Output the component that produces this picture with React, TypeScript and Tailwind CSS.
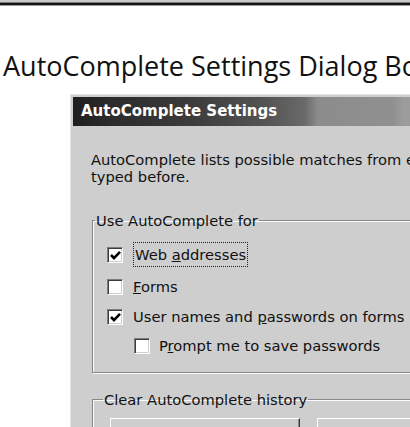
import React from "react";

const ui = { fontFamily: '"DejaVu Sans", Tahoma, sans-serif' };

function Check({ checked }: { checked?: boolean }) {
  return (
    <span className="w-[16px] h-[16px] shrink-0 bg-white border border-t-[#7d7d7d] border-l-[#7d7d7d] border-b-white border-r-white shadow-[inset_1px_1px_0_#3c3c3c,inset_-1px_-1px_0_#cfcfcf] flex items-center justify-center">
      {checked && (
        <svg width="11" height="11" viewBox="0 0 11 11">
          <path d="M1 5 L4 8.2 L10 1.8" fill="none" stroke="#000" strokeWidth="2.6" />
        </svg>
      )}
    </span>
  );
}

function Row({ checked, indent, children }: { checked?: boolean; indent?: boolean; children: React.ReactNode }) {
  return (
    <div className={`h-[30px] flex items-center ${indent ? "pl-[27px] gap-[9px]" : "gap-[10px]"}`}>
      <Check checked={checked} />
      <span className="text-[14.7px] text-[#111]">{children}</span>
    </div>
  );
}

function Button({ children }: { children: React.ReactNode }) {
  return (
    <div className="w-[190px] h-[30px] shrink-0 border border-t-white border-l-white border-b-[#3a3a3a] border-r-[#3a3a3a] shadow-[inset_-1px_-1px_0_#888] pt-[3px] text-center text-[14.7px] text-[#111]">
      {children}
    </div>
  );
}

export default function App() {
  return (
    <div className="w-[410px] h-[427px] overflow-hidden bg-white">
      {/* page rule */}
      <div className="h-[2px] bg-[#cacaca]" />
      <div className="h-[1px] bg-[#7a7a7a]" />
      <div className="h-[2px] bg-[#141414]" />
      <div className="h-[1px] bg-[#9a9a9a]" />

      <h1
        className="pl-[3px] pt-[44px] h-[88px] text-[27px] leading-[32px] text-[#111] whitespace-nowrap"
        style={{ fontFamily: '"Open Sans", "Noto Sans", sans-serif' }}
      >
        AutoComplete Settings Dialog Box
      </h1>

      <div className="ml-[70px] w-[420px] bg-[#cecece] border-t border-l border-[#e4e4e4] pt-[2px] pl-[2px]" style={ui}>
        <div className="h-[29px] flex items-center pl-[8px] bg-[linear-gradient(90deg,#1f1f1f_0px,#2c2c2c_40px,#3c3c3c_120px,#555_195px,#6a6a6a_232px,#8c8c8c_245px,#909090_320px,#9c9c9c_330px)]">
          <span className="text-white font-bold text-[15px]">AutoComplete Settings</span>
        </div>

        <div className="pl-[18px] pt-[25px]">
          <p className="text-[14.7px] leading-[17px] text-[#111] whitespace-nowrap">
            AutoComplete lists possible matches from entries you've
            <br />
            typed before.
          </p>

          <fieldset className="ml-px mt-[27px] border border-[#888] shadow-[inset_1px_1px_0_#fafafa,1px_1px_0_#fafafa] pb-[11px]">
            <legend className="ml-[2px] px-[1px] text-[14.7px] leading-[17px] text-[#111]">Use AutoComplete for</legend>
            <div className="pl-[14px] pt-[11px]">
              <Row checked>
                <span className="border border-dotted border-[#222] px-[1px] py-[3px]">
                  Web <u>a</u>ddresses
                </span>
              </Row>
              <div className="mt-[2px]">
                <Row>
                  <u>F</u>orms
                </Row>
              </div>
              <Row checked>
                User names and <u>p</u>asswords on forms
              </Row>
              <div className="-mt-[1px]">
                <Row indent>
                  P<u>r</u>ompt me to save passwords
                </Row>
              </div>
            </div>
          </fieldset>

          <fieldset className="ml-px mt-[18px] border border-[#888] shadow-[inset_1px_1px_0_#fafafa,1px_1px_0_#fafafa] pb-[12px]">
            <legend className="ml-[10px] px-[1px] text-[14.7px] leading-[17px] text-[#111]">Clear AutoComplete history</legend>
            <div className="flex gap-[17px] pl-[17px] pt-[10px]">
              <Button>Clear Forms</Button>
              <Button>Clear Passwords</Button>
            </div>
          </fieldset>
        </div>
      </div>
    </div>
  );
}
